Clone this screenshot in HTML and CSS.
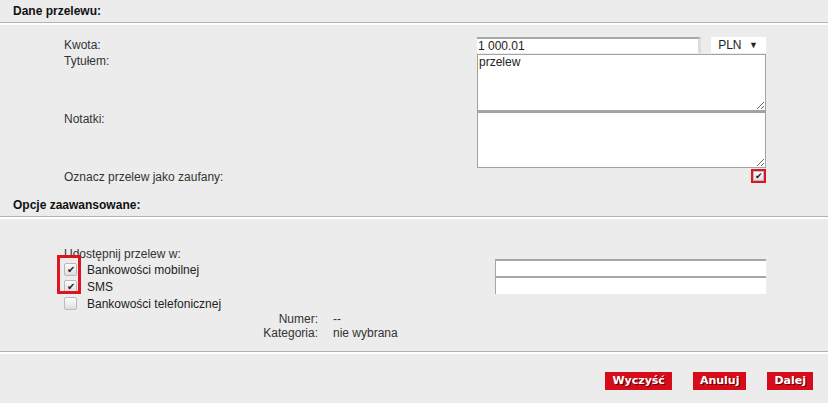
FILE: index.html
```html
<!DOCTYPE html>
<html lang="pl">
<head>
<meta charset="utf-8">
<title>Dane przelewu</title>
<link rel="stylesheet" href="styles.css">
</head>
<body>
<div class="page">
  <div class="sec-head">Dane przelewu:</div>
  <div class="sec-body sec-main">
    <div class="form">
      <div class="lbl lbl-kwota">Kwota:</div>
      <div class="field amount-row">
        <input class="amount" type="text" value="1 000.01">
        <div class="currency"><span>PLN</span><span class="arrow">▼</span></div>
      </div>
      <div class="lbl">Tytułem:</div>
      <div class="field"><textarea class="ta ta1">przelew</textarea></div>
      <div class="lbl">Notatki:</div>
      <div class="field"><textarea class="ta ta2"></textarea></div>
      <div class="lbl lbl-trust">Oznacz przelew jako zaufany:</div>
      <div class="field trust-field">
        <span class="hl-one"><span class="cb cb-small checked">✔</span></span>
      </div>
    </div>
  </div>

  <div class="sec-head">Opcje zaawansowane:</div>
  <div class="sec-body sec-adv">
    <div class="share">
      <div class="share-title">Udostępnij przelew w:</div>
      <div class="share-row">
        <div class="opt"><span class="cb checked">✔</span><span>Bankowości mobilnej</span></div>
        <input class="txt" type="text">
      </div>
      <div class="share-row">
        <div class="opt"><span class="cb checked">✔</span><span>SMS</span></div>
        <input class="txt" type="text">
      </div>
      <div class="share-row">
        <div class="opt"><span class="cb"></span><span>Bankowości telefonicznej</span></div>
      </div>
      <div class="hl-two"></div>
    </div>
    <div class="meta">
      <div class="meta-k">Numer:</div><div class="meta-v">--</div>
      <div class="meta-k">Kategoria:</div><div class="meta-v">nie wybrana</div>
    </div>
  </div>

  <div class="footer">
    <button class="btn" type="button">Wyczyść</button>
    <button class="btn" type="button">Anuluj</button>
    <button class="btn" type="button">Dalej</button>
  </div>
</div>
</body>
</html>
```

FILE: styles.css
```css
html, body {
  margin: 0;
  padding: 0;
  background: #ffffff;
}

body {
  font-family: "Liberation Sans", Arial, sans-serif;
  font-size: 12px;
  color: #222;
}

.page {
  width: 828px;
  height: 403px;
  background: #ececec;
  overflow: hidden;
}

.sec-head {
  height: 22px;
  line-height: 23px;
  padding-left: 13px;
  font-weight: bold;
  color: #111;
  border-bottom: 1px solid #b2b2b2;
}

.sec-body {
  border-top: 2px solid #ffffff;
}

.sec-main {
  padding: 12px 0 9px 64px;
}

.form {
  display: grid;
  grid-template-columns: 413px 289px;
}

.lbl {
  line-height: 16px;
  color: #333;
}

.field {
  display: flex;
}

.amount-row {
  height: 16px;
  gap: 10px;
}

.amount {
  box-sizing: border-box;
  width: 225px;
  height: 16px;
  margin: 0;
  padding: 0 1px;
  border: none;
  border-top: 2px solid #a8a8a8;
  border-right: 3px solid #dcdcdc;
  background: #fff;
  font: 12px "Liberation Sans", Arial, sans-serif;
  color: #222;
  outline: none;
}

.currency {
  width: 55px;
  height: 16px;
  background: #fff;
  display: flex;
  align-items: center;
  justify-content: space-between;
  padding: 0 8px 0 7px;
  box-sizing: border-box;
  font-size: 12px;
  color: #222;
}

.arrow {
  font-size: 9px;
}

.ta {
  box-sizing: border-box;
  width: 289px;
  margin: 0;
  padding: 0 1px;
  border: 1px solid #a3a3a3;
  background: #fff;
  font: 12px "Liberation Sans", Arial, sans-serif;
  color: #222;
  resize: both;
  outline: none;
  display: block;
}

.ta1 {
  height: 57px;
  margin-top: 1px;
}

.ta2 {
  height: 57px;
  border-top: 2px solid #a3a3a3;
}

.lbl-trust {
  line-height: 16px;
  padding-top: 1px;
}

.trust-field {
  justify-content: flex-end;
  padding-top: 1px;
}

.hl-one {
  display: flex;
  align-items: center;
  justify-content: center;
  width: 15px;
  height: 14px;
  box-sizing: border-box;
  border: 2px solid #e0141e;
  overflow: hidden;
}

.cb {
  display: inline-flex;
  align-items: center;
  justify-content: center;
  box-sizing: border-box;
  width: 13px;
  height: 13px;
  border: 1px solid #b9b9b9;
  border-radius: 2px;
  background: linear-gradient(#fdfdfd, #dedede);
  font-size: 10px;
  line-height: 1;
  color: #222;
  flex: none;
}

.cb-small {
  width: 11px;
  height: 10px;
  border-radius: 0;
  font-size: 9px;
}

/* advanced section */
.sec-adv {
  padding: 28px 0 11px 64px;
}

.share {
  position: relative;
}

.share-title {
  line-height: 14px;
  color: #333;
}

.share-row {
  display: flex;
  height: 17px;
  align-items: center;
}

.opt {
  width: 431px;
  display: flex;
  align-items: center;
  gap: 10px;
  color: #222;
}

.txt {
  box-sizing: border-box;
  width: 271px;
  height: 18px;
  margin: -4px 0 0 0;
  padding: 0 2px;
  border: none;
  border-top: 2px solid #a6a6a6;
  border-left: 1px solid #a6a6a6;
  background: #fff;
  outline: none;
}

.hl-two {
  position: absolute;
  left: -7px;
  top: 8px;
  width: 24px;
  height: 39px;
  box-sizing: border-box;
  border: 3px solid #e0141e;
}

.meta {
  display: grid;
  grid-template-columns: 254px auto;
  column-gap: 15px;
  line-height: 14px;
  color: #333;
}

.meta-k {
  text-align: right;
}

.footer {
  border-top: 1px solid #b2b2b2;
  box-shadow: inset 0 2px 0 #ffffff;
  padding: 20px 15px 0 0;
  display: flex;
  justify-content: flex-end;
  gap: 21px;
}

.btn {
  height: 18px;
  margin: 0;
  padding: 0 7px;
  border: none;
  background: #d60c1b;
  color: #fff;
  font: bold 11px "DejaVu Sans", Verdana, sans-serif;
  line-height: 18px;
  text-shadow: 1px 1px 0 #6a0008;
  cursor: pointer;
}
```
